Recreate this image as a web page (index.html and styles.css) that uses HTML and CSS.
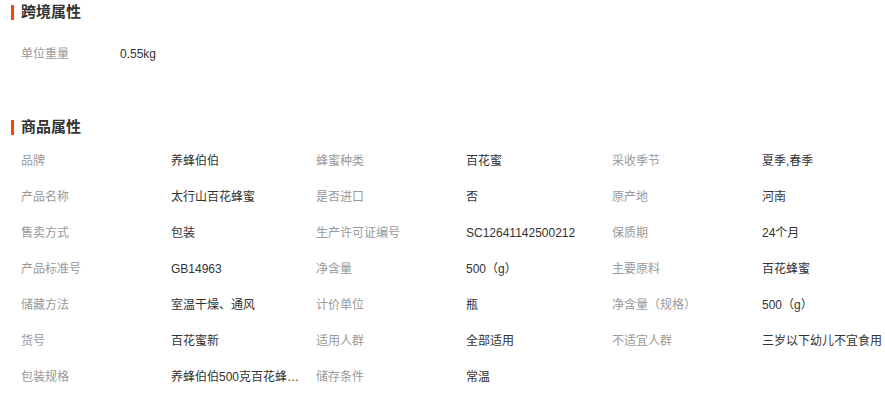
FILE: index.html
```html
<!DOCTYPE html>
<html lang="zh-CN">
<head>
<meta charset="utf-8">
<title>属性</title>
<link rel="stylesheet" href="styles.css">
</head>
<body>
<section class="block block-cross">
  <h3 class="block-title">跨境属性</h3>
  <ul class="simple-list">
    <li class="simple-item"><span class="lbl lbl-short">单位重量</span><span class="val">0.55kg</span></li>
  </ul>
</section>
<section class="block">
  <h3 class="block-title">商品属性</h3>
  <div class="attr-grid">
    <span class="lbl">品牌</span><span class="val">养蜂伯伯</span>
    <span class="lbl">蜂蜜种类</span><span class="val">百花蜜</span>
    <span class="lbl">采收季节</span><span class="val val-last">夏季,春季</span>

    <span class="lbl">产品名称</span><span class="val">太行山百花蜂蜜</span>
    <span class="lbl">是否进口</span><span class="val">否</span>
    <span class="lbl">原产地</span><span class="val val-last">河南</span>

    <span class="lbl">售卖方式</span><span class="val">包装</span>
    <span class="lbl">生产许可证编号</span><span class="val">SC12641142500212</span>
    <span class="lbl">保质期</span><span class="val val-last">24个月</span>

    <span class="lbl">产品标准号</span><span class="val">GB14963</span>
    <span class="lbl">净含量</span><span class="val">500（g）</span>
    <span class="lbl">主要原料</span><span class="val val-last">百花蜂蜜</span>

    <span class="lbl">储藏方法</span><span class="val">室温干燥、通风</span>
    <span class="lbl">计价单位</span><span class="val">瓶</span>
    <span class="lbl">净含量（规格）</span><span class="val val-last">500（g）</span>

    <span class="lbl">货号</span><span class="val">百花蜜新</span>
    <span class="lbl">适用人群</span><span class="val">全部适用</span>
    <span class="lbl">不适宜人群</span><span class="val val-last">三岁以下幼儿不宜食用</span>

    <span class="lbl">包装规格</span><span class="val" title="养蜂伯伯500克百花蜂蜜瓶装">养蜂伯伯500克百花蜂蜜瓶装</span>
    <span class="lbl">储存条件</span><span class="val">常温</span>
  </div>
</section>
</body>
</html>
```
FILE: styles.css
```css
* { box-sizing: border-box; }
html, body {
  margin: 0;
  padding: 0;
  background: #fff;
  overflow: hidden;
}
body {
  font-family: "Liberation Sans", "Noto Sans CJK SC", sans-serif;
  font-size: 12px;
  color: #333;
  width: 885px;
}
.block-cross {
  margin-bottom: 43px;
}
.block-title {
  margin: 0;
  height: 24px;
  line-height: 24px;
  font-size: 15px;
  font-weight: bold;
  color: #333;
  display: flex;
  align-items: center;
  padding-left: 11px;
}
.block-title::before {
  content: "";
  display: block;
  width: 3px;
  height: 15px;
  background: #ff4400;
  margin-right: 7px;
}
.simple-list {
  list-style: none;
  margin: 12px 0 0;
  padding: 0 0 0 21px;
}
.simple-item {
  display: flex;
  height: 36px;
  line-height: 36px;
}
.lbl {
  color: #999;
  white-space: nowrap;
}
.lbl-short { width: 99px; }
.val {
  color: #333;
  white-space: nowrap;
  overflow: hidden;
  text-overflow: ellipsis;
}
.attr-grid {
  margin-top: 4px;
  padding-left: 21px;
  display: grid;
  grid-template-columns: 150px 145px 150px 146px 150px 123px;
  grid-auto-rows: 36px;
  line-height: 37px;
}
.attr-grid .val { width: 129px; }
.attr-grid .val-last { width: auto; overflow: visible; }
```
